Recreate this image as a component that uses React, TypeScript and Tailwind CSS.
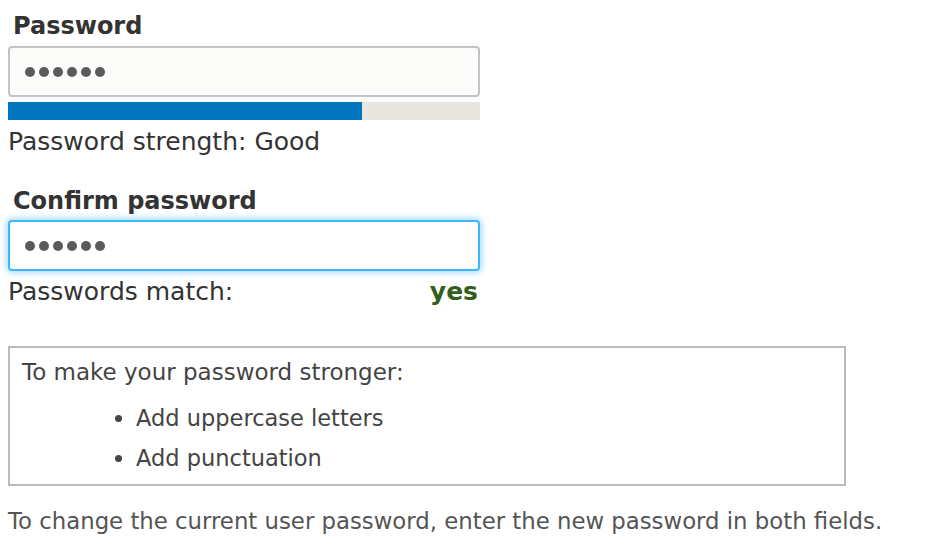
import React from "react";

const Dots = () => (
  <div className="flex gap-[4px]">
    {Array.from({ length: 6 }).map((_, i) => (
      <span key={i} className="block h-[10px] w-[10px] rounded-full bg-[#5b5b5b]" />
    ))}
  </div>
);

export default function App() {
  return (
    <div className="h-[546px] w-[928px] overflow-hidden bg-white text-[#333] [font-family:'DejaVu_Sans',sans-serif]">
      <div className="flex w-[480px] flex-col pl-[8px] pt-[10px]">
        <div className="pl-[5px] text-[24px] font-bold leading-[32px]">Password</div>
        <div className="mt-[4px] flex h-[51px] items-center rounded-[4px] border-2 border-[#c4c4c4] bg-[#fcfcfa] px-[15px]">
          <Dots />
        </div>
        <div className="mt-[5px] h-[18px] bg-[#e8e6e1]">
          <div className="h-full w-[354px] bg-[#0074bd]" />
        </div>
        <div className="mt-[6px] text-[25px] leading-[32px]">Password strength: Good</div>
        <div className="mt-[27px] pl-[5px] text-[24px] font-bold leading-[32px]">Confirm password</div>
        <div className="mt-[3px] flex h-[51px] items-center rounded-[4px] border-2 border-[#40b6ff] bg-white px-[15px] shadow-[0_0_6px_2px_rgba(64,182,255,0.45)]">
          <Dots />
        </div>
        <div className="mt-[5px] flex justify-between text-[25px] leading-[32px]">
          <span>Passwords match:</span>
          <span className="pr-[2px] font-bold text-[#325e1c]">yes</span>
        </div>
      </div>
      <div className="ml-[8px] mt-[38px] w-[838px] border-2 border-[#bcbcbc] px-[12px] pb-[6px] pt-[4px] text-[23px] leading-[40px] text-[#444]">
        <div>To make your password stronger:</div>
        <ul className="mt-[6px] list-disc pl-[114px] text-[22.5px]">
          <li>Add uppercase letters</li>
          <li>Add punctuation</li>
        </ul>
      </div>
      <div className="ml-[8px] mt-[19px] text-[22.8px] leading-[32px] text-[#555]">
        To change the current user password, enter the new password in both fields.
      </div>
    </div>
  );
}
